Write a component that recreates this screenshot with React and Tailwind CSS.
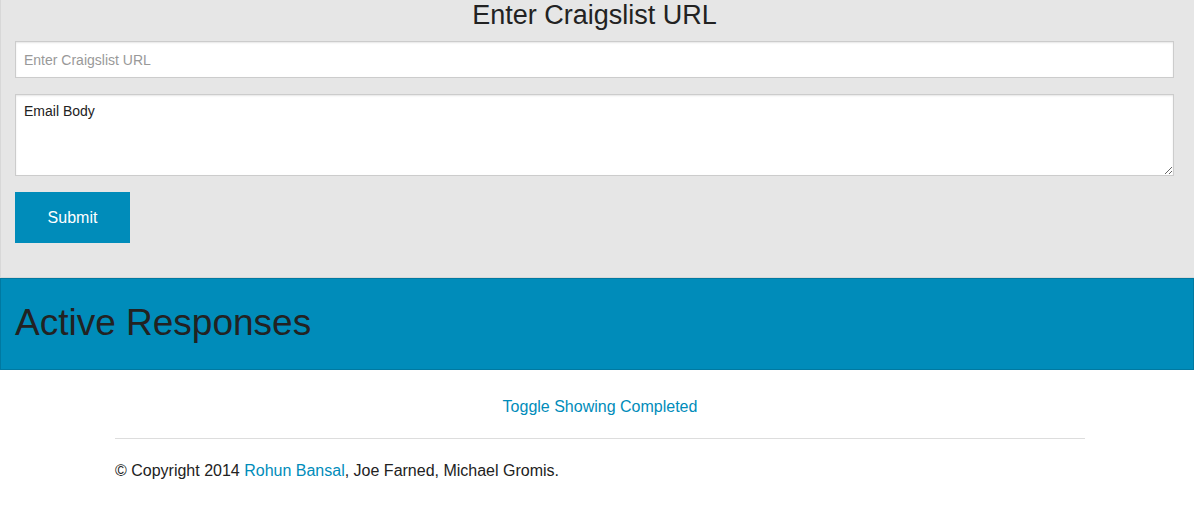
export default function App() {
  return (
    <div className="min-h-[524px] bg-white font-['Liberation_Sans',Arial,sans-serif] text-[#222]">
      {/* formulaire */}
      <div className="h-[278px] border-l border-b border-[#d8d8d8] bg-[#e6e6e6] pl-[14px]">
        <div className="w-[1159px]">
          <h3 className="text-center text-[27px] leading-[31px] text-[#222]">
            Enter Craigslist URL
          </h3>
          <input
            type="text"
            placeholder="Enter Craigslist URL"
            className="mt-[10px] block h-[37px] w-full border border-[#cccccc] bg-white px-[8px] text-[14px] text-[#222] placeholder:text-[#999] shadow-[inset_0_1px_2px_rgba(0,0,0,0.1)]"
          />
          <textarea
            defaultValue="Email Body"
            className="mt-[16px] block h-[82px] w-full border border-[#cccccc] bg-white px-[8px] pt-[6px] text-[14px] text-[#222] shadow-[inset_0_1px_2px_rgba(0,0,0,0.1)]"
          />
          <button className="mt-[16px] h-[51px] w-[115px] bg-[#008cba] text-[16px] text-white">
            Submit
          </button>
        </div>
      </div>

      {/* bandeau */}
      <div className="h-[92px] border border-[#0079a1] bg-[#008cba] pl-[14px]">
        <h2 className="pt-[22px] text-[37px] leading-[44px] text-[#222]">Active Responses</h2>
      </div>

      {/* pied */}
      <div className="ml-[115px] w-[970px]">
        <div className="pt-[25px] text-center">
          <a className="text-[16px] text-[#008cba]">Toggle Showing Completed</a>
        </div>
        <div className="mt-[19px] border-t border-[#dddddd]">
          <p className="pt-[20px] text-[16px] text-[#222]">
            © Copyright 2014 <a className="text-[#008cba]">Rohun Bansal</a>, Joe Farned, Michael Gromis.
          </p>
        </div>
      </div>
    </div>
  );
}
